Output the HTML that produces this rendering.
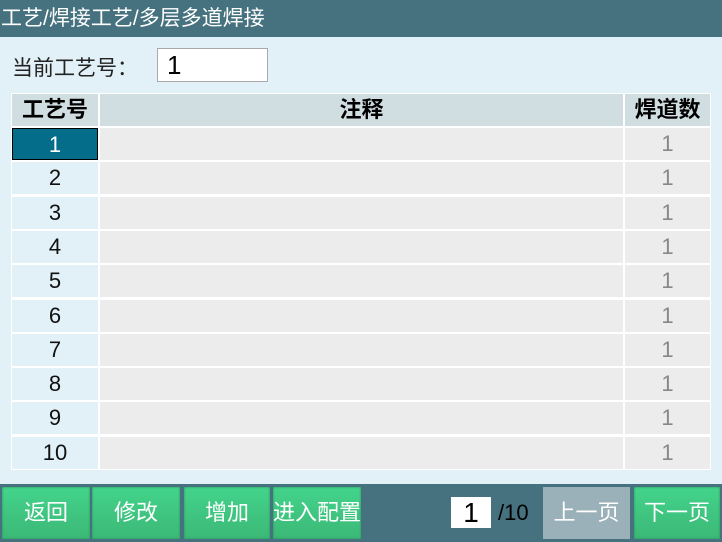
<!DOCTYPE html>
<html><head><meta charset="utf-8"><style>
*{margin:0;padding:0;box-sizing:border-box}
body{width:722px;height:542px;background:#e2f1f7;font-family:"Liberation Sans","Noto Sans CJK SC",sans-serif;position:relative;overflow:hidden}
.title{position:absolute;left:0;top:0;width:722px;height:37px;background:#46717f;color:#fff;font-size:21px;line-height:37px;padding-left:1px}
.lbl{position:absolute;left:12px;top:52px;font-size:21px;color:#222}
.inp{position:absolute;left:157px;top:48px;width:111px;height:34px;background:#fff;border:1px solid #aaa;font-size:26px;line-height:32px;padding-left:9px}
.c{position:absolute;text-align:center;font-size:22px}
.bar{position:absolute;left:0;top:484px;width:722px;height:58px;background:#46717f}
.btn{position:absolute;top:487px;height:52px;background:linear-gradient(#43d48b,#3cb877);color:#fff;font-size:22px;line-height:52px;text-align:center;box-shadow:inset 0 0 2px #2a8a5a}
</style></head><body>
<div class="title">工艺/焊接工艺/多层多道焊接</div>
<div class="lbl">当前工艺号：</div>
<div class="inp">1</div>
<div style="position:absolute;left:11px;top:93px;width:700px;height:377px;background:#fff"></div>
<div class="c" style="left:12px;top:94px;width:86px;height:32px;background:#d0dde1;font-weight:bold;line-height:32px">工艺号</div>
<div class="c" style="left:100px;top:94px;width:523px;height:32px;background:#d0dde1;font-weight:bold;line-height:32px">注释</div>
<div class="c" style="left:625px;top:94px;width:85px;height:32px;background:#d0dde1;font-weight:bold;line-height:32px">焊道数</div>
<div id="rows"></div>
<script>
var h='';for(var i=0;i<10;i++){var y=128+i*34.3;
h+='<div class="c" style="left:12px;top:'+y+'px;width:86px;height:32px;line-height:32px;'+(i==0?'background:#046e8a;color:#fff;border:1px solid #000':'background:#e2f1f7;color:#111')+'">'+(i+1)+'</div>';
h+='<div class="c" style="left:100px;top:'+y+'px;width:523px;height:32px;background:#ececec"></div>';
h+='<div class="c" style="left:625px;top:'+y+'px;width:85px;height:32px;line-height:32px;background:#ececec;color:#888">1</div>';}
document.getElementById('rows').innerHTML=h;
</script>
<div class="bar"></div>
<div class="btn" style="left:2px;width:88px">返回</div>
<div class="btn" style="left:92px;width:88px">修改</div>
<div class="btn" style="left:184px;width:86px">增加</div>
<div class="btn" style="left:273px;width:88px">进入配置</div>
<div style="position:absolute;left:451px;top:497px;width:40px;height:31px;background:#fff;font-size:28px;line-height:31px;text-align:center">1</div>
<div style="position:absolute;left:498px;top:500px;font-size:22px;color:#000">/10</div>
<div class="btn" style="left:543px;width:87px;background:#9bb1b9;box-shadow:none">上一页</div>
<div class="btn" style="left:634px;width:86px">下一页</div>
</body></html>
